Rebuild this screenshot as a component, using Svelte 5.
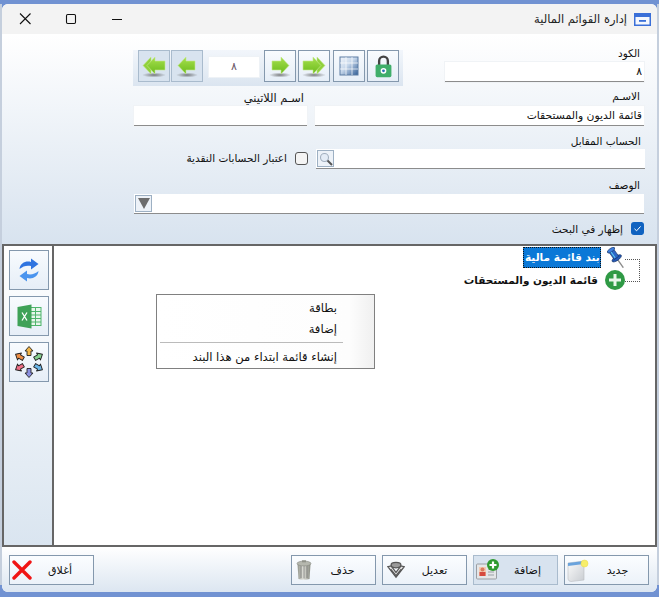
<script lang="ts">
	// footer actions, right to left as the window shows them
	const actions = [
		{ id: 'new', label: 'جديد' },
		{ id: 'add', label: 'إضافة', hover: true },
		{ id: 'edit', label: 'تعديل' },
		{ id: 'del', label: 'حذف' },
	];

	// ring of small arrows on the third side button
	const ring = [
		{ a: 0, c: '#f2b648' },
		{ a: 60, c: '#86d08e' },
		{ a: 120, c: '#6bb6e8' },
		{ a: 180, c: '#8a8fe0' },
		{ a: 240, c: '#ee6f86' },
		{ a: 300, c: '#f08f45' },
	];
</script>

<svg width="0" height="0" class="defs" aria-hidden="true">
	<defs>
		<linearGradient id="g-green" x1="0" y1="0" x2="0" y2="1">
			<stop offset="0" stop-color="#a6e04e" />
			<stop offset="1" stop-color="#6cbb1c" />
		</linearGradient>
		<radialGradient id="g-shadow">
			<stop offset="0" stop-color="#555" stop-opacity="0.75" />
			<stop offset="1" stop-color="#555" stop-opacity="0" />
		</radialGradient>
		<linearGradient id="g-grid" x1="0" y1="0" x2="1" y2="1">
			<stop offset="0" stop-color="#f2f6fb" />
			<stop offset="0.45" stop-color="#c5d6ea" />
			<stop offset="1" stop-color="#2f5c95" />
		</linearGradient>
		<linearGradient id="g-trash" x1="0" y1="0" x2="1" y2="0">
			<stop offset="0" stop-color="#8f9288" />
			<stop offset="0.45" stop-color="#e3e4dd" />
			<stop offset="1" stop-color="#85887e" />
		</linearGradient>
		<linearGradient id="g-doc" x1="0" y1="0" x2="1" y2="1">
			<stop offset="0" stop-color="#fbfbfb" />
			<stop offset="1" stop-color="#c9cdd2" />
		</linearGradient>
	</defs>
</svg>

<div class="window">
	<header class="titlebar">
		<div class="controls">
			<svg width="16" height="16" viewBox="0 0 16 16"><path d="M3 2.5 L13.5 13 M13.5 2.5 L3 13" stroke="#111" stroke-width="1.1" fill="none" /></svg>
			<svg width="16" height="16" viewBox="0 0 16 16"><rect x="3.5" y="3.5" width="9" height="9" rx="1.2" stroke="#111" stroke-width="1.1" fill="none" /></svg>
			<svg width="16" height="16" viewBox="0 0 16 16"><path d="M3 8.5 H13" stroke="#111" stroke-width="1.1" /></svg>
		</div>
		<div class="title">
			<span>إدارة القوائم المالية</span>
			<svg width="17" height="13" viewBox="0 0 17 13"><rect width="17" height="13" fill="#3a6fd8" /><rect x="1.5" y="4" width="14" height="7.5" fill="#f4f7fd" /><rect x="5" y="7" width="7" height="1.8" fill="#3a6fd8" /></svg>
		</div>
	</header>

	<section class="form">
		<div class="row first">
			<div class="navbar">
				<button class="nav off" aria-label="first">
					<svg width="30" height="30" viewBox="0 0 30 30"><ellipse cx="15" cy="24" rx="12" ry="2.5" fill="url(#g-shadow)" /><path d="M12 6 L4 14.5 L12 23 V6Z" fill="#8fd03a" stroke="#c6e98f" stroke-width=".6" /><path d="M16 6 L8 14.500 L16 23 V19 H26 V10 H16Z" fill="url(#g-green)" stroke="#c6e98f" stroke-width=".6" /></svg>
				</button>
				<button class="nav off" aria-label="previous">
					<svg width="30" height="30" viewBox="0 0 30 30"><ellipse cx="15" cy="24" rx="11" ry="2.5" fill="url(#g-shadow)" /><path d="M14 6 L6 14.5 L14 23 V19 H23 V10 H14Z" fill="url(#g-green)" stroke="#c6e98f" stroke-width=".6" /></svg>
				</button>
				<div class="counter">٨</div>
				<button class="nav" aria-label="next">
					<svg width="30" height="30" viewBox="0 0 30 30"><ellipse cx="15" cy="24" rx="11" ry="2.5" fill="url(#g-shadow)" /><path d="M16 6 L24 14.5 L16 23 V19 H7 V10 H16Z" fill="url(#g-green)" stroke="#c6e98f" stroke-width=".6" /></svg>
				</button>
				<button class="nav" aria-label="last">
					<svg width="30" height="30" viewBox="0 0 30 30"><ellipse cx="15" cy="24" rx="12" ry="2.5" fill="url(#g-shadow)" /><path d="M18 6 L26 14.5 L18 23 V6Z" fill="#8fd03a" stroke="#c6e98f" stroke-width=".6" /><path d="M14 6 L22 14.5 L14 23 V19 H4 V10 H14Z" fill="url(#g-green)" stroke="#c6e98f" stroke-width=".6" /></svg>
				</button>
				<button class="nav" aria-label="grid">
					<svg width="20" height="20" viewBox="0 0 20 20"><rect x="1" y="1" width="18" height="18" fill="url(#g-grid)" stroke="#5c7ca3" /><path d="M1 7 H19 M1 13 H19 M7 1 V19 M13 1 V19" stroke="#fff" stroke-opacity=".7" /></svg>
				</button>
				<button class="nav" aria-label="lock">
					<svg width="19" height="23" viewBox="0 0 24 29"><path d="M6.500 14 V7.500 a5.500 5.500 0 0 1 11 0 V14" fill="none" stroke="#444" stroke-width="3" /><rect x="2" y="12" width="20" height="16" rx="2" fill="#3fae6a" /><circle cx="12" cy="20" r="3.600" fill="#fff" /><circle cx="12" cy="20" r="1.800" fill="#2a6fb5" /></svg>
				</button>
			</div>
			<div class="field code">
				<span class="lbl">الكود</span>
				<input dir="rtl" value="٨" />
			</div>
		</div>

		<div class="row second">
			<div class="field latin">
				<span class="lbl latin-lbl">اسـم اللاتيني</span>
				<input dir="rtl" />
			</div>
			<div class="field name">
				<span class="lbl">الاسـم</span>
				<input dir="rtl" value="قائمة الديون والمستحقات" />
			</div>
		</div>

		<div class="row third">
			<label class="check plain">
				<span>اعتبار الحسابات النقدية</span>
				<i class="box"></i>
			</label>
			<div class="field account">
				<span class="lbl">الحساب المقابل</span>
				<div class="inputwrap">
					<button class="mini" aria-label="search">
						<svg width="14" height="14" viewBox="0 0 14 14"><circle cx="5.5" cy="5.5" r="4" fill="#e4ecf6" stroke="#a3b0bf" stroke-width="1.1" /><path d="M8.5 8.5 L13 13" stroke="#555" stroke-width="2" /></svg>
					</button>
				</div>
			</div>
		</div>

		<div class="row fourth">
			<div class="field desc">
				<span class="lbl">الوصف</span>
				<div class="inputwrap">
					<button class="mini" aria-label="expand">
						<svg width="14" height="13" viewBox="0 0 14 13"><path d="M1 1 H13 L7 12Z" fill="#6d6d6d" /></svg>
					</button>
				</div>
			</div>
		</div>

		<div class="row fifth">
			<label class="check">
				<span>إظهار في البحث</span>
				<i class="box on">
					<svg width="13" height="13" viewBox="0 0 13 13"><path d="M3.5 6.8 L5.6 8.8 L9.6 4.4" stroke="#fff" stroke-width="1" fill="none" /></svg>
				</i>
			</label>
		</div>
	</section>

	<section class="panel">
		<aside class="side">
			<button class="tool" aria-label="refresh">
				<svg width="20" height="24" viewBox="0 0 20 24">
					<path d="M0.500 11 C1 5 7 2.500 12 4 V0.500 L19.500 6 L12 11.500 V8 C8 7 4 8 0.500 11Z" fill="#2f74e0" />
					<path d="M19.500 13 C19 19 13 21.500 8 20 V23.500 L0.500 18 L8 12.500 V16 C12 17 16 16 19.500 13Z" fill="#4a94ee" />
				</svg>
			</button>
			<button class="tool" aria-label="excel">
				<svg width="25" height="25" viewBox="0 0 25 25">
					<rect x="13" y="3.5" width="11" height="18" fill="#e9f6ec" stroke="#4fb56c" />
					<path d="M14 7.5 H24 M14 11 H24 M14 14.5 H24 M14 18 H24 M18.5 4 V21" stroke="#4fb56c" />
					<path d="M0.5 3 L14.5 0.5 V24.5 L0.5 22Z" fill="#3fa257" />
					<path d="M5 8.5 L10 16.5 M10 8.5 L5 16.5" stroke="#fff" stroke-width="1.3" />
				</svg>
			</button>
			<button class="tool" aria-label="arrows">
				<svg width="30" height="32" viewBox="0 0 30 32" stroke="#222" stroke-width=".9" stroke-linejoin="round">
					{#each ring as r (r.a)}
						<path transform="rotate({r.a} 15 16)" d="M15 0.500 L19 5 H17 V9.500 H13 V5 H11Z" fill={r.c} />
					{/each}
				</svg>
			</button>
		</aside>
		<div class="tree">
			<div class="node top">
				<span class="selected">بند قائمة مالية</span>
				<svg class="pin" width="18" height="21" viewBox="0 0 18 21">
					<g transform="translate(6 6) rotate(-35)">
						<path d="M0 6 V18" stroke="#8b8b8b" stroke-width="1.300" />
						<ellipse cx="0" cy="6.500" rx="5.500" ry="2.200" fill="#2457b5" stroke="#14305f" stroke-width=".6" />
						<rect x="-2.800" y="-3" width="5.600" height="9" fill="#2c66c8" stroke="#14305f" stroke-width=".6" />
						<ellipse cx="0" cy="-3.500" rx="4.300" ry="1.800" fill="#3f7fe0" stroke="#14305f" stroke-width=".6" />
						<path d="M-1 -2 V5" stroke="#5fd0f0" stroke-width="1" />
					</g>
				</svg>
				<div class="link"></div>
			</div>
			<div class="node child">
				<span class="name-bold">قائمة الديون والمستحقات</span>
				<svg width="20" height="20" viewBox="0 0 20 20"><circle cx="10" cy="10" r="10" fill="#2f9a45" /><path d="M10 4 V16 M4 10 H16" stroke="#e8f6ea" stroke-width="3" /></svg>
			</div>

			<div class="menu">
				<div class="item">بطاقة</div>
				<div class="item">إضافة</div>
				<hr />
				<div class="item">إنشاء قائمة ابتداء من هذا البند</div>
			</div>
		</div>
	</section>

	<footer class="footer">
		<button class="action close">
			<svg width="20" height="20" viewBox="0 0 20 20"><path d="M2 2 L18 18 M18 2 L2 18" stroke="#f01414" stroke-width="3.400" stroke-linecap="round" /></svg>
			<span>أغلاق</span>
		</button>
		<div class="actions">
			{#each actions.slice().reverse() as a (a.id)}
				<button class="action" class:hover={a.hover}>
					{#if a.id === 'del'}
						<svg class="ico" width="16" height="20" viewBox="0 0 16 20"><path d="M1.5 4 H14.5 L13.5 19 Q8 20.5 2.5 19Z" fill="url(#g-trash)" /><path d="M5 6 V18 M8 6 V18.5 M11 6 V18" stroke="#777" stroke-width=".8" /><ellipse cx="8" cy="3.5" rx="7" ry="2.4" fill="#b5b7ae" stroke="#7d7f77" stroke-width=".5" /><rect x="6" y="0.3" width="4" height="2" fill="#8f9188" /></svg>
					{:else if a.id === 'edit'}
						<svg class="ico" width="18" height="18" viewBox="0 0 22 20" fill="none" stroke="#555" stroke-width="1.500"><path d="M1 6 L11 19 L21 6 L17 5 L11 13 L5 5Z" fill="#e6e6e6" /><path d="M4.5 9 L11 17 L17.5 9" /><ellipse cx="11" cy="4" rx="6" ry="3.3" fill="#9a9a9a" /></svg>
					{:else if a.id === 'add'}
						<svg width="24" height="22" viewBox="0 0 24 22"><rect x="0.5" y="5" width="20" height="15" rx="1" fill="#e4e6e8" stroke="#9a9ea3" /><rect x="3" y="8" width="7" height="9" fill="#f4c9b0" /><circle cx="6.5" cy="10.5" r="2" fill="#d87a5d" /><rect x="3.5" y="13" width="6" height="4" fill="#d64a3f" /><path d="M12 10 H18 M12 13 H18 M12 16 H18" stroke="#9aa0a6" /><circle cx="17" cy="6" r="6" fill="#2f9a2f" /><path d="M17 2.5 V9.5 M13.5 6 H20.5" stroke="#fff" stroke-width="2.2" /></svg>
					{:else}
						<svg width="22" height="23" viewBox="0 0 22 23"><path d="M1 4 L17 2 V21 L4 22.5 Q1.500 22.500 1 20Z" fill="url(#g-doc)" stroke="#b8bcc1" stroke-width=".6" /><path d="M1 4 L17 2 V5 L1 7Z" fill="#6aa3dc" /><circle cx="17.500" cy="4.500" r="3.500" fill="#f7ee6a" stroke="#e8d94a" stroke-width=".5" /></svg>
					{/if}
					<span>{a.label}</span>
				</button>
			{/each}
		</div>
	</footer>
</div>

<style>
	:global(body) {
		margin: 0;
		/* the pale sliver of desktop left and right of the window */
		background:
			linear-gradient(#7192d2 4px, #c5cfdd 4px, #c5cfdd 585px, #7192d2 585px) left / 2px 100% no-repeat,
			linear-gradient(#7192d2 4px, #c5cfdd 4px, #c5cfdd 585px, #7192d2 585px) right / 2px 100% no-repeat,
			#7192d2;
		font-family: 'DejaVu Sans', Tahoma, sans-serif;
	}

	button {
		padding: 0;
		font: inherit;
		cursor: default;
	}

	.defs {
		position: absolute;
	}

	.window {
		box-sizing: border-box;
		width: 655px;
		height: 588px;
		margin: 4px 2px 0;
		border-radius: 6px;
		overflow: hidden;
		display: flex;
		flex-direction: column;
		background: #fff;
		color: #111;
		font-size: 10.5px;
	}

	.titlebar {
		flex: none;
		height: 30px;
		background: #f3f3f3;
		display: flex;
		align-items: center;
		justify-content: space-between;
		padding: 0 6px 0 15px;
	}

	.controls {
		display: flex;
		gap: 30px;
	}

	.title {
		display: flex;
		align-items: center;
		gap: 7px;
		font-size: 11.5px;
		color: #222;
	}

	.form {
		flex: none;
		box-sizing: border-box;
		height: 210px;
		padding: 12px 13px 0 132px;
		background: linear-gradient(#fff, #d8e3ef);
	}

	.row {
		display: flex;
		justify-content: space-between;
	}

	.second {
		margin-top: 4px;
	}

	.third {
		margin-top: 7px;
		justify-content: flex-end;
		margin-right: -1px;
	}

	.fourth {
		margin-top: 9px;
	}

	.fifth {
		margin-top: 8px;
		justify-content: flex-end;
	}

	.navbar {
		margin: 4px 0 0 -1px;
		height: 36px;
		width: 270px;
		box-sizing: border-box;
		padding: 0 3px 4px 5px;
		display: flex;
		background: linear-gradient(#f2f6fb, #dbe5f0);
	}

	.nav {
		width: 32px;
		height: 32px;
		flex: none;
		box-sizing: border-box;
		margin-right: 1px;
		display: flex;
		align-items: center;
		justify-content: center;
		border: 1px solid #8498ad;
		background: linear-gradient(#f8fbfe, #e6eef7);
	}

	.nav:nth-child(4),
	.nav:nth-child(6) {
		margin-right: 2px;
	}

	.nav:nth-child(5) {
		margin-right: 3px;
	}

	.nav.off {
		background: #d8e3ef;
		border-color: #a9bbcd;
	}

	.counter {
		width: 50px;
		height: 20px;
		margin: 7px 5px 0 5px;
		background: #fff;
		text-align: center;
		line-height: 20px;
		font-size: 11px;
		color: #6d5a6a;
		box-shadow: 0 0 0 1px #eef2f6;
	}

	.field {
		display: flex;
		flex-direction: column;
	}

	.lbl {
		height: 16px;
		line-height: 14px;
		padding-right: 4px;
		text-align: right;
	}

	input {
		box-sizing: border-box;
		height: 20px;
		width: 100%;
		border: 0;
		border-bottom: 1px solid #8c8c8c;
		background: #fff;
		padding: 0 2px;
		outline: none;
		font: inherit;
		font-size: 10.8px;
		color: #111;
		box-shadow: 0 0 0 1px #f0f3f6;
	}

	.code {
		width: 199px;
	}

	.latin {
		width: 173px;
		margin-top: 1px;
	}

	.latin-lbl {
		padding-right: 3px;
		margin-top: 2px;
		height: 13px;
		line-height: 11px;
		font-size: 11.4px;
	}

	.name {
		width: 329px;
	}

	.name .lbl {
		line-height: 12px;
	}

	.account {
		width: 329px;
	}

	.account .lbl {
		line-height: 16px;
	}

	.desc {
		width: 510px;
	}

	.inputwrap {
		height: 20px;
		box-sizing: border-box;
		background: #fff;
		border-bottom: 1px solid #8c8c8c;
		display: flex;
	}

	.mini {
		width: 17px;
		height: 17px;
		margin: 1px 0 0 1px;
		box-sizing: border-box;
		border: 1px solid #9db0c3;
		background: #edf2f8;
		display: flex;
		align-items: center;
		justify-content: center;
	}

	.check {
		display: flex;
		align-items: center;
		gap: 8px;
	}

	.plain {
		align-self: flex-end;
		height: 18px;
		margin-bottom: 2px;
		margin-right: 8px;
	}

	.box {
		display: block;
		box-sizing: border-box;
		width: 13px;
		height: 13px;
		border-radius: 3px;
		border: 1px solid #555;
		background: #f4f4f4;
	}

	.box.on {
		border: 0;
		background: #0f62c0;
	}

	.box svg {
		display: block;
	}

	.panel {
		flex: none;
		box-sizing: border-box;
		height: 303px;
		border: 2px solid #666;
		display: flex;
	}

	.side {
		flex: none;
		width: 50px;
		box-sizing: border-box;
		border-right: 2px solid #666;
		padding: 4px 0 0 5px;
		display: flex;
		flex-direction: column;
		gap: 6px;
		background: linear-gradient(#fff, #dae5f0);
	}

	.tool {
		box-sizing: border-box;
		width: 40px;
		height: 40px;
		border: 1px solid #8498ad;
		background: linear-gradient(#f8fbfe, #e6eef7);
		display: flex;
		align-items: center;
		justify-content: center;
	}

	.tree {
		flex: 1;
		position: relative;
		background: #fff;
		padding: 1px 13px 0 0;
	}

	.node {
		display: flex;
		justify-content: flex-end;
		align-items: center;
		position: relative;
	}

	.top {
		height: 21px;
		gap: 6px;
		padding-right: 17px;
	}

	.selected {
		background: #0a78d7;
		color: #fff;
		font-weight: bold;
		height: 21px;
		line-height: 20px;
		width: 78px;
		box-sizing: border-box;
		outline: 1px dotted #111;
		outline-offset: -1px;
		padding: 0 2px;
		white-space: nowrap;
		text-align: right;
		overflow: hidden;
	}

	.pin {
		position: relative;
		z-index: 1;
	}

	.link {
		position: absolute;
		right: 2px;
		top: 12px;
		width: 15px;
		height: 23px;
		box-sizing: border-box;
		border: 1px dotted #555;
		border-left: 0;
	}

	.child {
		height: 24px;
		gap: 7px;
		padding-right: 17px;
		font-weight: bold;
		z-index: 1;
	}

	.name-bold {
		color: #111;
	}

	.menu {
		position: absolute;
		left: 102px;
		top: 48px;
		box-sizing: border-box;
		width: 219px;
		height: 75px;
		border: 1px solid #808080;
		background: linear-gradient(to right, #fff 0, #fdfdfd 192px, #f0f0f0 100%);
		padding: 3px 37px 0 0;
		font-size: 11.6px;
	}

	.item {
		height: 21px;
		line-height: 21px;
		text-align: right;
	}

	.menu hr {
		margin: 2px -6px 4px 3px;
		border: 0;
		border-top: 1px solid #bbb;
	}

	.footer {
		flex: 1;
		display: flex;
		justify-content: space-between;
		padding: 8px 8px 0 7px;
		background: linear-gradient(#fff, #dce6f1);
	}

	.actions {
		display: flex;
		gap: 6px;
	}

	.action {
		box-sizing: border-box;
		width: 85px;
		height: 30px;
		border: 1px solid #8498ad;
		background: linear-gradient(#fbfdff, #ecf2f9);
		color: #111;
		display: flex;
		align-items: center;
		padding: 0 2px;
		font-size: 11px;
	}

	.action .ico {
		margin-left: 2px;
	}

	.action span {
		flex: 1;
		text-align: center;
	}

	.close span {
		padding-right: 3px;
	}

	.action.hover {
		background: #d8e3ef;
		border-color: #a9bbcd;
	}
</style>
